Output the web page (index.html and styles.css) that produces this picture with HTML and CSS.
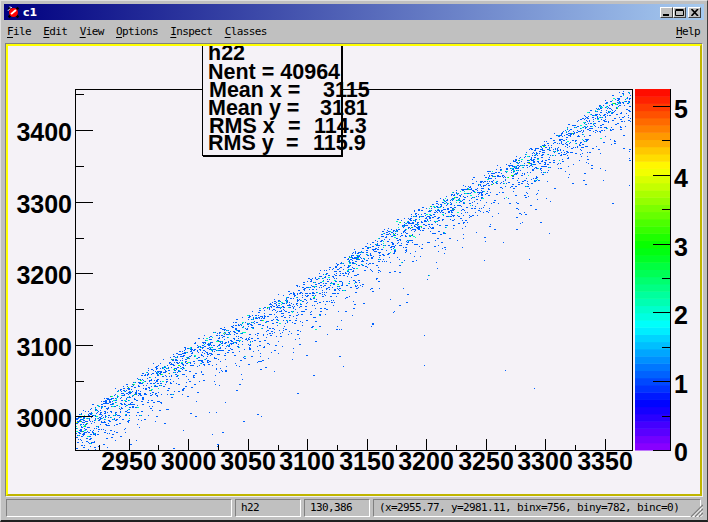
FILE: index.html
```html
<!DOCTYPE html>
<html lang="en">
<head>
    <meta charset="UTF-8">
    <meta name="viewport" content="width=device-width, initial-scale=1.0">
    <title>c1</title>
    <link rel="stylesheet" href="styles.css">
</head>
<body>
    <div class="window">
        <div class="titlebar">
            <svg class="appicon" width="13" height="13" viewBox="0 0 16 16">
                <path d="M2 2 L14 14 M14 2 L2 14" stroke="#000" stroke-width="3"/>
                <circle cx="8" cy="8" r="5.5" fill="#f00"/>
                <path d="M5 10 L11 5" stroke="#fff" stroke-width="2.4"/>
                <path d="M1 6 L4 3 M3 1 L6 2" stroke="#fff" stroke-width="1.2"/>
            </svg>
            <span class="title">c1</span>
            <div class="winbuttons">
                <span class="winbtn"><svg width="9" height="7"><rect x="1" y="5" width="6" height="2"/></svg></span>
                <span class="winbtn"><svg width="9" height="7"><path d="M0.5 1.5 H8.5 V6.5 H0.5 Z M0.5 0.5 H8.5" fill="none" stroke="#000"/></svg></span>
                <span class="winbtn close"><svg width="8" height="7"><path d="M0.5 0 L7 7 M7 0 L0.5 7" stroke="#000" stroke-width="1.6"/></svg></span>
            </div>
        </div>

        <div class="menubar">
            <span><u>F</u>ile</span>
            <span><u>E</u>dit</span>
            <span><u>V</u>iew</span>
            <span><u>O</u>ptions</span>
            <span><u>I</u>nspect</span>
            <span><u>C</u>lasses</span>
            <span class="help"><u>H</u>elp</span>
        </div>

        <div class="canvas-frame">
            <div class="canvas-pad">
                <!-- viewBox keeps the window's pixel numbers, easier to read off the picture -->
                <svg class="plot" width="692" height="448" viewBox="8 46 692 448">
                    <g id="points"></g>
                    <path class="line" d="M75.5 450.5 V89.5 H632 V450.5 H75"/>
                    <path class="line" d="M75 130.5 H93 M75 202.5 H93 M75 273.5 H93 M75 345.5 H93 M75 416.5 H93
                        M75 94.5 H84 M75 166.5 H84 M75 238.5 H84 M75 309.5 H84 M75 381.5 H84"/>
                    <path class="line" d="M129.5 439 V450 M188.5 439 V450 M248.5 439 V450 M307.5 439 V450 M367.5 439 V450
                        M426.5 439 V450 M486.5 439 V450 M545.5 439 V450 M605.5 439 V450
                        M99.5 445 V450 M158.5 445 V450 M218.5 445 V450 M278.5 445 V450 M337.5 445 V450
                        M396.5 445 V450 M456.5 445 V450 M515.5 445 V450 M575.5 445 V450"/>

                    <g class="axis-label" text-anchor="end">
                        <text x="72" y="141">3400</text>
                        <text x="72" y="213">3300</text>
                        <text x="72" y="284">3200</text>
                        <text x="72" y="356">3100</text>
                        <text x="72" y="427">3000</text>
                    </g>
                    <g class="axis-label" text-anchor="middle">
                        <text x="129" y="470">2950</text>
                        <text x="188.5" y="470">3000</text>
                        <text x="248" y="470">3050</text>
                        <text x="307" y="470">3100</text>
                        <text x="367" y="470">3150</text>
                        <text x="426" y="470">3200</text>
                        <text x="486" y="470">3250</text>
                        <text x="545" y="470">3300</text>
                        <text x="605" y="470">3350</text>
                    </g>

                    <g id="palette"></g>
                    <path class="line" d="M670.5 89 V450"/>
                    <path class="line" d="M653 106.5 H671 M653 175.5 H671 M653 244.5 H671 M653 312.5 H671 M653 381.5 H671 M653 450.5 H671
                        M662 140.5 H671 M662 209.5 H671 M662 278.5 H671 M662 347.5 H671 M662 416.5 H671"/>
                    <g class="axis-label">
                        <text x="674" y="118">5</text>
                        <text x="674" y="187">4</text>
                        <text x="674" y="256">3</text>
                        <text x="674" y="324">2</text>
                        <text x="674" y="393">1</text>
                        <text x="674" y="461">0</text>
                    </g>

                    <rect class="stats-box" x="202.5" y="40" width="139" height="115"/>
                    <path class="line" d="M342.5 46 V156.5 H203"/>
                    <g class="stats">
                        <text x="208" y="60">h22</text>
                        <text x="208" y="79">Nent = 40964</text>
                        <text x="209" y="97">Mean x =</text><text x="323" y="97">3115</text>
                        <text x="208" y="115">Mean y =</text><text x="320" y="115">3181</text>
                        <text x="209" y="133">RMS x</text><text x="288" y="133">=</text><text x="314" y="133">114.3</text>
                        <text x="208" y="150">RMS y</text><text x="286" y="150">=</text><text x="313" y="150">115.9</text>
                    </g>
                </svg>
            </div>
        </div>

        <div class="statusbar">
            <div class="cell first"></div>
            <div class="cell small">h22</div>
            <div class="cell small">130,386</div>
            <div class="cell last">(x=2955.77, y=2981.11, binx=756, biny=782, binc=0)</div>
            <svg class="grip" width="13" height="13" viewBox="0 0 13 13">
                <path d="M13 1 L1 13 M13 5 L5 13 M13 9 L9 13" stroke="#808080" stroke-width="1.5"/>
                <path d="M13 2.5 L2.5 13 M13 6.5 L6.5 13 M13 10.5 L10.5 13" stroke="#fff" stroke-width="1"/>
            </svg>
        </div>
    </div>

    <script src="plot.js"></script>
</body>
</html>
```

FILE: styles.css
```css
html, body {
    margin: 0;
    padding: 0;
    background-color: #c0c0c0;
}
.window {
    box-sizing: border-box;
    width: 708px;
    height: 522px;
    padding: 3px;
    background-color: #c0c0c0;
    border-top: 1px solid #dfdfdf;
    border-left: 1px solid #dfdfdf;
    border-right: 1px solid #404040;
    border-bottom: 2px solid #202020;
    font-family: "DejaVu Sans Mono", "Liberation Mono", monospace;
    font-size: 11px;
    letter-spacing: -0.62px;
    color: #000;
    position: relative;
}
.titlebar {
    height: 16px;
    display: flex;
    align-items: center;
    padding: 0 3px 0 3px;
    background: linear-gradient(to right, #000080, #a6caf0);
}
.appicon {
    flex: none;
}
.title {
    margin-left: 3px;
    font-family: "DejaVu Sans", sans-serif;
    font-weight: bold;
    font-size: 11px;
    letter-spacing: 0;
    color: white;
}
.winbuttons {
    margin-left: auto;
    display: flex;
}
.winbtn {
    box-sizing: border-box;
    width: 13px;
    height: 11px;
    display: flex;
    align-items: center;
    justify-content: center;
    background-color: #c0c0c0;
    border-top: 1px solid white;
    border-left: 1px solid white;
    border-right: 1px solid #404040;
    border-bottom: 1px solid #404040;
}
.winbtn.close {
    margin-left: 2px;
}
.menubar {
    height: 23px;
    display: flex;
    align-items: center;
    gap: 12.3px;
    padding: 0 4px 0 3px;
}
.menubar u {
    text-underline-offset: 2px;
}
.help {
    margin-left: auto;
}
.canvas-frame {
    box-sizing: border-box;
    width: 698px;
    height: 454px;
    margin-left: 1px;
    border-top: 1px solid #808080;
    border-left: 1px solid #808080;
    border-right: 1px solid #f0f0f0;
    border-bottom: 1px solid #f0f0f0;
}
.canvas-pad {
    box-sizing: border-box;
    width: 696px;
    height: 452px;
    background-color: #f5f2f7;
    border-top: 2px solid #ffff00;
    border-left: 2px solid #ffff00;
    border-right: 2px solid #bfb500;
    border-bottom: 2px solid #bfb500;
}
.plot {
    display: block;
}
.line {
    fill: none;
    stroke: black;
    stroke-width: 1;
    shape-rendering: crispEdges;
}
.axis-label text {
    font-family: "Liberation Sans", Arial, sans-serif;
    font-weight: bold;
    font-size: 25px;
    letter-spacing: 0;
    fill: black;
}
.stats-box {
    fill: #f5f2f7;
    stroke: black;
    stroke-width: 1;
    shape-rendering: crispEdges;
}
.stats text {
    font-family: "Liberation Sans", Arial, sans-serif;
    font-weight: bold;
    font-size: 21.5px;
    letter-spacing: 0;
    fill: black;
}
.statusbar {
    display: flex;
    gap: 3px;
    margin: 2px 0 0 2px;
    height: 18px;
}
.cell {
    box-sizing: border-box;
    height: 18px;
    padding-left: 5px;
    line-height: 16px;
    border-top: 1px solid #808080;
    border-left: 1px solid #808080;
    border-right: 1px solid white;
    border-bottom: 1px solid white;
}
.cell.first {
    width: 226px;
}
.cell.small {
    width: 66px;
}
.cell.last {
    width: 328px;
}
.grip {
    position: absolute;
    right: 4px;
    bottom: 3px;
}
```

FILE: plot.js
```js
// palette: 50 bands, purple at the bottom up to red at the top
function hueColor(t) {
    return `hsl(${Math.round(275 * (1 - t))}, 100%, 50%)`
}

function drawPalette() {
    const top = 89, bottom = 450, bands = 50
    const h = (bottom - top) / bands
    let tag = ''
    for (let i = 0; i < bands; i++) {
        const y = bottom - (i + 1) * h
        tag += `<rect x="635" y="${y}" width="36" height="${h + 0.5}" fill="${hueColor((i + 0.5) / bands)}"/>`
    }
    document.getElementById('palette').innerHTML = tag
}

// small seeded generator so the picture is the same on every load
let seed = 20417
function rand() {
    seed = (seed + 0x6D2B79F5) | 0
    let t = Math.imul(seed ^ (seed >>> 15), 1 | seed)
    t = (t + Math.imul(t ^ (t >>> 7), 61 | t)) ^ t
    return ((t ^ (t >>> 14)) >>> 0) / 4294967296
}

function expo(scale) {
    return -Math.log(1 - rand()) * scale
}

function drawPoints() {
    const bins = new Map()
    const add = (x, y) => {
        x = Math.floor(x)
        y = Math.floor(y)
        if (x < 76 || x > 630 || y < 91 || y > 449) return
        const key = x + ',' + y
        bins.set(key, (bins.get(key) || 0) + 1)
    }

    for (let i = 0; i < 3400; i++) {
        // fewer entries toward the top right corner
        const x = 76 + 556 * Math.pow(rand(), 1.1)
        // the band wobbles a little, its upper edge is not a clean line
        const ridge = 414 - 0.588 * (x - 75) + Math.sin(x / 37) * 3
        const y = ridge + expo(8) + expo(rand() < 0.75 ? 9 : 20) + (rand() - 0.5) * 6
        add(x, y)
        if (rand() < 0.45) add(x + 1, y)
    }

    // the few lone entries far from the band
    const lone = [[505, 370], [534, 388], [549, 233], [522, 222], [424, 335], [261, 416], [212, 434]]
    lone.forEach(p => add(p[0], p[1]))

    const paths = new Map()
    bins.forEach((count, key) => {
        const [x, y] = key.split(',')
        const color = hueColor(Math.min(count, 5.2) / 5.2 + 0.02)
        paths.set(color, (paths.get(color) || '') + `M${x} ${y}h1v1h-1z`)
    })
    let tag = ''
    paths.forEach((d, color) => {
        tag += `<path d="${d}" fill="${color}" shape-rendering="crispEdges"/>`
    })
    document.getElementById('points').innerHTML = tag
}

drawPalette()
drawPoints()
```
